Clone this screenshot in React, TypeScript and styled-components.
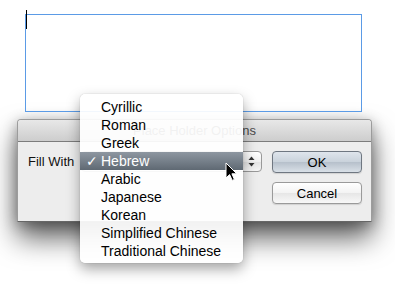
import React from "react";
import styled, { createGlobalStyle } from "styled-components";

const Global = createGlobalStyle`
  html, body { margin: 0; padding: 0; background: #fff; }
  body { width: 395px; height: 288px; overflow: hidden; font-family: "Liberation Sans", Arial, sans-serif; }
`;

const Page = styled.div`
  position: relative;
  width: 395px;
  height: 288px;
  display: flex;
  flex-direction: column;
  align-items: flex-start;
`;

const TextFrame = styled.div`
  position: relative;
  box-sizing: border-box;
  margin: 14px 0 0 25px;
  width: 337px;
  height: 98px;
  border: 1px solid #5b9be6;
`;

const Caret = styled.span`
  position: absolute;
  left: 0px;
  top: -5px;
  width: 1px;
  height: 19px;
  background: #000;
`;

const Dialog = styled.div`
  box-sizing: border-box;
  margin: 7px 0 0 17px;
  width: 355px;
  height: 103px;
  display: flex;
  flex-direction: column;
  background: #ededed;
  border: 1px solid #9c9c9c;
  border-bottom-color: #666;
  border-radius: 4px 4px 0 0;
  box-shadow: 0 16px 28px rgba(0, 0, 0, 0.62), 0 3px 14px rgba(0, 0, 0, 0.3);
`;

const TitleBar = styled.div`
  height: 21px;
  flex: none;
  display: flex;
  align-items: center;
  justify-content: center;
  background: linear-gradient(#e8e8e8, #cdcdcd);
  border-bottom: 1px solid #7c7c7c;
  border-radius: 3px 3px 0 0;
  font-size: 13px;
  color: #4a4a4a;
`;

const Body = styled.div`
  flex: 1;
  display: flex;
  align-items: flex-start;
  gap: 10px;
  padding: 9px 9px 0 10px;
`;

const FieldRow = styled.div`
  flex: 1;
  display: flex;
  align-items: center;
  gap: 7px;
  height: 21px;
`;

const Label = styled.span`
  font-size: 13px;
  color: #111;
  white-space: nowrap;
`;

const PopUp = styled.div`
  flex: 1;
  box-sizing: border-box;
  height: 21px;
  display: flex;
  justify-content: flex-end;
  align-items: center;
  padding-right: 6px;
  border: 1px solid #999;
  border-radius: 4px;
  background: linear-gradient(#ffffff, #f1f1f1 50%, #e3e3e3 51%, #f6f6f6);
`;

const Buttons = styled.div`
  width: 90px;
  display: flex;
  flex-direction: column;
  gap: 9px;
`;

const Button = styled.div<{ $default?: boolean }>`
  box-sizing: border-box;
  height: 22px;
  display: flex;
  align-items: center;
  justify-content: center;
  font-size: 13px;
  color: #000;
  border: 1px solid ${(p) => (p.$default ? "#6f7781" : "#9a9a9a")};
  border-radius: 4px;
  background: ${(p) =>
    p.$default
      ? "linear-gradient(#dfe5ec, #c9d2db 50%, #b6c0cb 51%, #d9e0e7)"
      : "linear-gradient(#ffffff, #f3f3f3 50%, #e6e6e6 51%, #f8f8f8)"};
  box-shadow: 0 1px 1px rgba(0, 0, 0, 0.12);
`;

const Menu = styled.div`
  position: absolute;
  left: 80px;
  top: 94px;
  width: 163px;
  box-sizing: border-box;
  padding: 4px 0 3px;
  background: rgba(255, 255, 255, 0.92);
  border-radius: 5px;
  box-shadow: 0 6px 14px rgba(0, 0, 0, 0.35), 0 0 1px rgba(0, 0, 0, 0.35);
`;

const Item = styled.div<{ $selected?: boolean }>`
  height: 18px;
  display: flex;
  align-items: center;
  font-size: 14px;
  color: ${(p) => (p.$selected ? "#fff" : "#000")};
  background: ${(p) => (p.$selected ? "linear-gradient(#8e97a1, #5f6973)" : "transparent")};
  white-space: nowrap;
`;

const Check = styled.span`
  width: 15px;
  margin-left: 6px;
  font-family: "DejaVu Sans", sans-serif;
  font-size: 14px;
  font-weight: bold;
`;

const Pointer = styled.svg`
  position: absolute;
  left: 225px;
  top: 162px;
`;

const items = [
  "Cyrillic",
  "Roman",
  "Greek",
  "Hebrew",
  "Arabic",
  "Japanese",
  "Korean",
  "Simplified Chinese",
  "Traditional Chinese",
];

export default function App() {
  return (
    <Page>
      <Global />
      <TextFrame>
        <Caret />
      </TextFrame>
      <Dialog>
        <TitleBar>Place Holder Options</TitleBar>
        <Body>
          <FieldRow>
            <Label>Fill With</Label>
            <PopUp>
              <svg width="7" height="11" viewBox="0 0 7 11">
                <path d="M3.5 0.5 L6.5 4 L0.5 4 Z" fill="#333" />
                <path d="M3.5 10.5 L6.5 7 L0.5 7 Z" fill="#333" />
              </svg>
            </PopUp>
          </FieldRow>
          <Buttons>
            <Button $default>OK</Button>
            <Button>Cancel</Button>
          </Buttons>
        </Body>
      </Dialog>
      <Menu>
        {items.map((t) => (
          <Item key={t} $selected={t === "Hebrew"}>
            <Check>{t === "Hebrew" ? "✓" : ""}</Check>
            {t}
          </Item>
        ))}
      </Menu>
      <Pointer width="13" height="20" viewBox="0 0 13 20">
        <path
          d="M1 1 L1 16 L4.6 12.6 L7.2 18.4 L9.4 17.4 L6.9 11.8 L11.8 11.8 Z"
          fill="#000"
          stroke="#fff"
          strokeWidth="1"
          strokeLinejoin="round"
        />
      </Pointer>
    </Page>
  );
}
